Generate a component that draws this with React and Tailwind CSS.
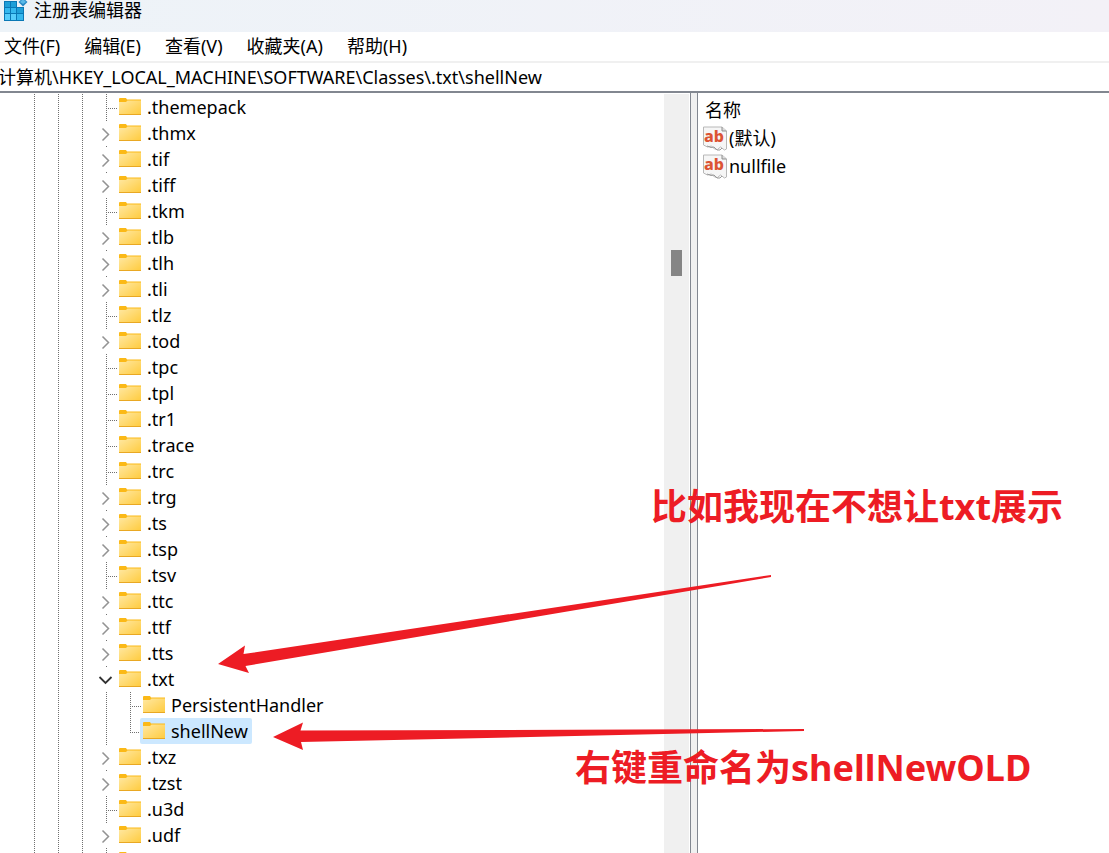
import clsx from 'clsx';

const MENU_ITEMS = ['文件(F)', '编辑(E)', '查看(V)', '收藏夹(A)', '帮助(H)'];

const TREE = [
  { name: '.themepack' },
  { name: '.thmx', closed: true },
  { name: '.tif', closed: true },
  { name: '.tiff', closed: true },
  { name: '.tkm' },
  { name: '.tlb', closed: true },
  { name: '.tlh', closed: true },
  { name: '.tli', closed: true },
  { name: '.tlz' },
  { name: '.tod', closed: true },
  { name: '.tpc' },
  { name: '.tpl' },
  { name: '.tr1' },
  { name: '.trace' },
  { name: '.trc' },
  { name: '.trg', closed: true },
  { name: '.ts', closed: true },
  { name: '.tsp', closed: true },
  { name: '.tsv' },
  { name: '.ttc', closed: true },
  { name: '.ttf', closed: true },
  { name: '.tts', closed: true },
  { name: '.txt', open: true },
  { name: 'PersistentHandler', child: true },
  { name: 'shellNew', child: true, last: true, selected: true },
  { name: '.txz', closed: true },
  { name: '.tzst', closed: true },
  { name: '.u3d' },
  { name: '.udf', closed: true },
  { name: '' },
];

const VALUES = ['(默认)', 'nullfile'];

const RegeditIcon = () => (
  <svg width="24" height="22" viewBox="0 0 24 22" className="shrink-0" aria-hidden="true">
    <path d="M0 1h13v6h7v14H0z" fill="#0a78b5" />
    <path d="M1 2h5v5H1zM7 2h5v5H7zM13 8h6v5h-6z" fill="#1f9fd8" />
    <path d="M1 8h5v5H1zM7 8h5v5H7zM13 14h6v6h-6z" fill="#35b8ee" />
    <path d="M1 14h5v6H1zM7 14h5v6H7z" fill="#56cdfb" />
    <path d="M19-2l4.500 4L19 6.500 14.500 2z" fill="#2588c4" />
    <path d="M19-1l3 3-3 2-3-2z" fill="#5ab9e8" />
  </svg>
);

const FolderIcon = () => (
  <svg width="22" height="18" viewBox="0 0 22 18" className="shrink-0" aria-hidden="true">
    <defs>
      <linearGradient id="folder" x1="0" y1="0" x2="1" y2="1">
        <stop offset="0" stopColor="#ffe8a3" />
        <stop offset="1" stopColor="#ffcb3d" />
      </linearGradient>
    </defs>
    <path d="M0 1q0-1 1-1h6l1 1.500h14v3H0z" fill="#fbb917" />
    <path d="M0 4h7l1.500-1.500H22v14q0 .5-.5.5h-21q-.5 0-.5-.5z" fill="url(#folder)" />
    <path d="M0 16h22v1H0z" fill="#e9a823" />
  </svg>
);

const StringIcon = () => (
  <svg width="25" height="25" viewBox="0 0 25 25" className="shrink-0" aria-hidden="true">
    <path d="M.5 1h18.500l4.500 4v18l-2 1-4-3-3 2.500-3-.5-3-3-4 1-4-2z" fill="#f6f6f6" stroke="#b8b8b8" />
    <path d="M4 20l4 1.500 3-.5 3 3h3l2-2" fill="none" stroke="#999" />
    <path d="M19 1v4h4.500" fill="#ddd" stroke="#8f8f8f" />
    <text x="11" y="16" textAnchor="middle" fontFamily="Noto Sans, sans-serif" fontWeight="800" fontSize="16" fill="#dc5434">ab</text>
  </svg>
);

// One cell of the dotted guide lines, 24px wide and as tall as a row
const Guide = ({ full, half, branch, closed, open }) => (
  <svg width="24" height="26" viewBox="0 0 24 26" className="shrink-0" fill="none" aria-hidden="true">
    {full && <path d="M10.500 0v26" stroke="#707070" strokeDasharray="1 1" />}
    {half && <path d="M10.500 0v15" stroke="#707070" strokeDasharray="1 1" />}
    {branch && <path d="M12 14.500h10" stroke="#707070" strokeDasharray="1 1" />}
    {(closed || open) && <path d="M10 .5h1" stroke="#707070" />}
    {closed && <path d="M6.500 8.500l6 6-6 6" stroke="#939393" strokeWidth="1.500" />}
    {open && <path d="M3.500 11l6 6 6-6" stroke="#333" strokeWidth="1.800" />}
  </svg>
);

const TreeRow = ({ node }) => (
  <li className="flex h-[26px] items-center pl-6">
    <Guide full />
    <Guide full />
    <Guide full />
    <Guide
      full={!node.closed && !node.open}
      branch={!node.closed && !node.open && !node.child}
      closed={node.closed}
      open={node.open}
    />
    {node.child && <Guide full={!node.last} half={node.last} branch />}
    <button
      type="button"
      className={clsx(
        'relative -ml-1 flex h-[26px] items-center gap-1.5 rounded-xs pl-[3px] pr-1',
        node.selected && 'bg-[#cce8ff]',
      )}
    >
      <FolderIcon />
      <span>{node.name}</span>
    </button>
  </li>
);

const Annotations = () => (
  <div className="pointer-events-none absolute inset-0 text-4xl font-bold whitespace-nowrap text-[#ed1c24]">
    <svg className="absolute inset-0 h-full w-full" fill="currentColor" aria-hidden="true">
      <path d="M218 664l27-18.500-1.500 8.500L771 575v2L245.500 666l3.500 7z" />
      <path d="M273 737l30-14.500-2.500 8L804 729v2L301 742l2 8z" />
    </svg>
    <p className="absolute left-[651px] top-[483px] leading-[48px]">比如我现在不想让txt展示</p>
    <p className="absolute left-[575px] top-[744px] leading-[48px]">右键重命名为shellNewOLD</p>
  </div>
);

const App = () => (
  <div className="relative flex h-screen flex-col overflow-hidden bg-white font-['Noto_Sans','Noto_Sans_CJK_SC',sans-serif] text-lg leading-[26px] text-black">
    <header className="flex h-8 shrink-0 items-start gap-1.5 bg-linear-to-r from-[#edf3f8] to-[#f3f1f7] pl-1">
      <RegeditIcon />
      <h1 className="leading-5">注册表编辑器</h1>
    </header>

    <nav className="flex h-[29px] shrink-0 items-center gap-6 pb-0.5 pl-1">
      {MENU_ITEMS.map((item) => (
        <button key={item} type="button">{item}</button>
      ))}
    </nav>

    <input
      aria-label="地址"
      className="-ml-0.5 h-8 shrink-0 border-t-2 border-b-2 border-t-[#f0f0f0] border-b-[#828790] pb-0.5 outline-none"
      defaultValue="计算机\HKEY_LOCAL_MACHINE\SOFTWARE\Classes\.txt\shellNew"
    />

    <main className="flex min-h-0 flex-1">
      <section className="flex w-[691px] shrink-0 border-r border-[#828790] pt-px">
        <ul className="min-w-0 flex-1 overflow-hidden">
          {TREE.map((node) => <TreeRow key={node.name} node={node} />)}
        </ul>
        <div className="mr-px w-[25px] bg-[#f0f0f0] pt-[156px] pl-[7px]">
          <div className="h-[26px] w-[11px] bg-[#858585]" />
        </div>
      </section>
      <div className="w-1.5 shrink-0 bg-[#f0f0f0]" />
      <section className="flex-1 border-l border-[#828790] pt-1 pl-[5px]">
        <h2 className="pl-0.5 leading-[27px]">名称</h2>
        <ul>
          {VALUES.map((value) => (
            <li key={value} className="flex h-7 items-center gap-px">
              <StringIcon />
              <span>{value}</span>
            </li>
          ))}
        </ul>
      </section>
    </main>

    <Annotations />
  </div>
);

export default App;
